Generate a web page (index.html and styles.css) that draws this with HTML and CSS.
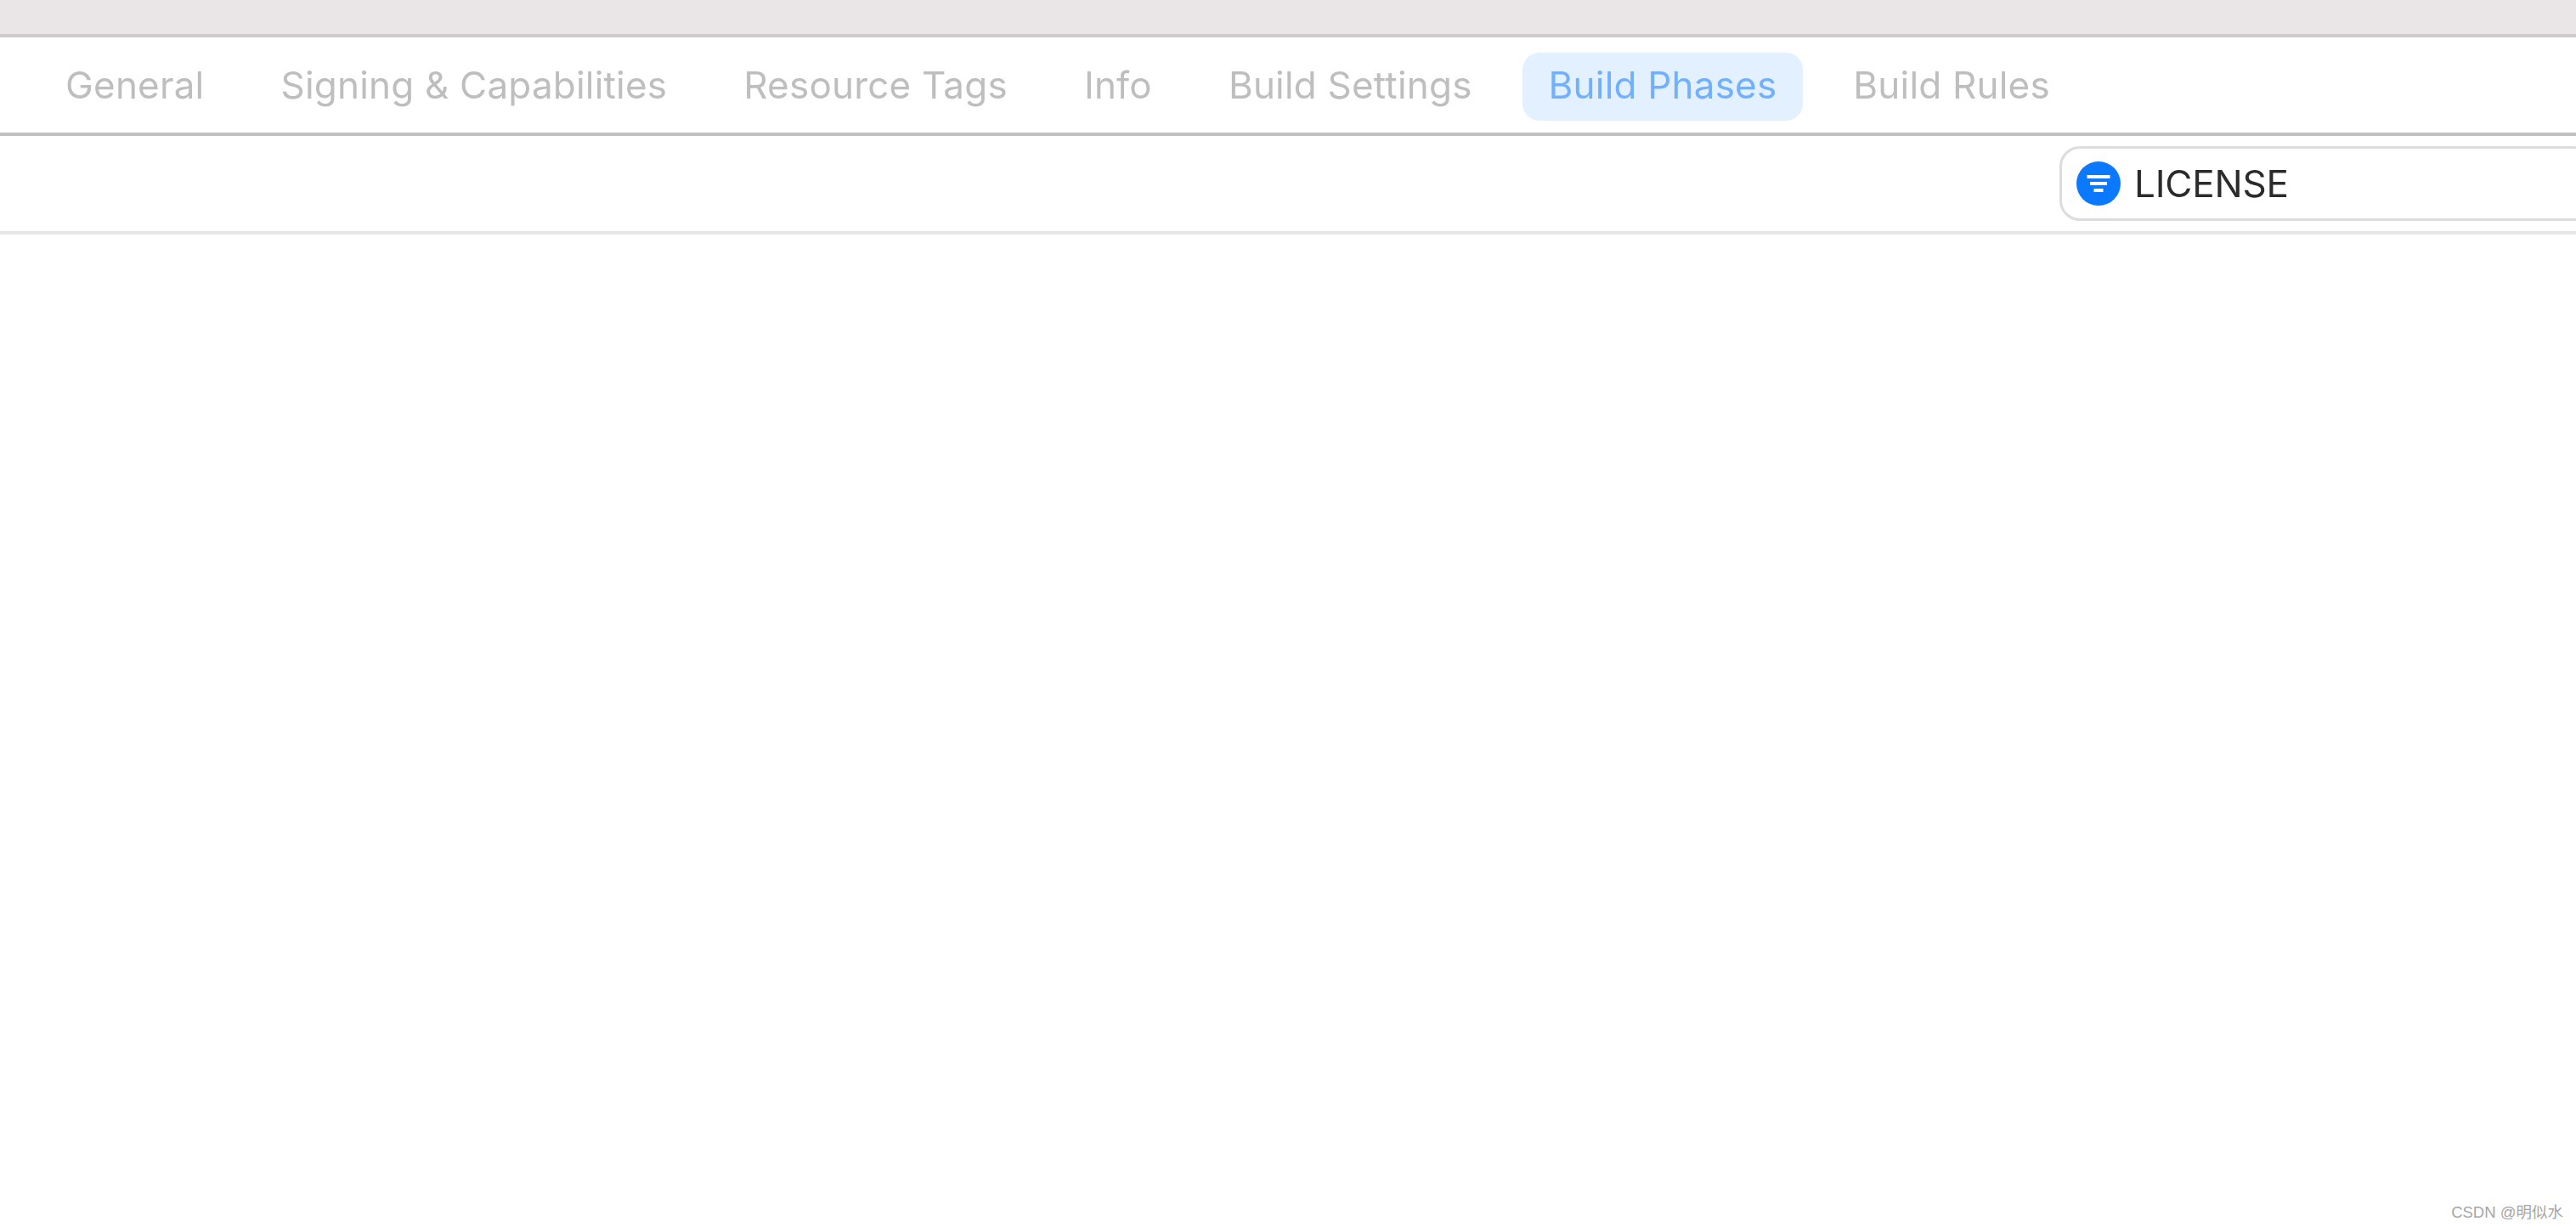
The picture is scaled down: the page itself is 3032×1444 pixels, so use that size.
FILE: index.html
```html
<!DOCTYPE html>
<html lang="en">
<head>
  <meta charset="UTF-8">
  <meta name="viewport" content="width=device-width, initial-scale=1.0">
  <title>Build Phases</title>
  <link rel="stylesheet" href="styles.css">
</head>
<body>
  <div class="titlebar"></div>

  <!-- Tabs -->
  <nav class="tabs">
    <div class="tab">General</div>
    <div class="tab">Signing &amp; Capabilities</div>
    <div class="tab">Resource Tags</div>
    <div class="tab">Info</div>
    <div class="tab">Build Settings</div>
    <div class="tab active">Build Phases</div>
    <div class="tab">Build Rules</div>
  </nav>

  <!-- Filter -->
  <div class="filterbar">
    <div class="filter">
      <svg class="filter-icon" viewBox="0 0 52 52">
        <circle cx="26" cy="26" r="26" fill="#0a78ff"/>
        <rect x="12.5" y="16" width="27" height="4" fill="#fff"/>
        <rect x="16" y="24" width="20" height="4" fill="#fff"/>
        <rect x="20.5" y="32" width="11" height="4" fill="#fff"/>
      </svg>
      <span class="filter-text">LICENSE</span>
    </div>
  </div>

  <div class="watermark">CSDN @明似水</div>
</body>
</html>
```

FILE: styles.css
```css
html, body {
  height: 100%;
}

body {
  margin: 0;
  position: relative;
  overflow: hidden;
  background: #fff;
  font-family: Inter, "Noto Sans", sans-serif;
}

.titlebar {
  height: 40px;
  background: #eae6e7;
  border-bottom: 4px solid #cfcbcc;
}

.tabs {
  display: flex;
  align-items: flex-start;
  gap: 28px;
  height: 94px;
  padding: 18px 0 0 46px;
  border-bottom: 4px solid #c1c1c1;
}

.tab {
  height: 80px;
  padding: 0 31px;
  line-height: 76px;
  font-size: 44px;
  letter-spacing: 0.2px;
  color: #bebebe;
  white-space: nowrap;
  border-radius: 20px;
  filter: blur(0.6px);
}

.tab.active {
  background: #e3f0ff;
  color: #72b0ff;
}

.filterbar {
  display: flex;
  justify-content: flex-end;
  align-items: center;
  height: 112px;
  border-bottom: 4px solid #e6e6e6;
}

.filter {
  display: flex;
  align-items: center;
  gap: 16px;
  box-sizing: border-box;
  width: 628px;
  height: 88px;
  margin-right: -20px;
  padding-left: 17px;
  border: 3px solid #dcdcdc;
  border-radius: 24px;
}

.filter-icon {
  width: 52px;
  height: 52px;
  flex-shrink: 0;
}

.filter-text {
  font-size: 44px;
  letter-spacing: -0.2px;
  color: #2b2b2b;
  filter: blur(0.5px);
}

.watermark {
  position: absolute;
  right: 15px;
  bottom: 6px;
  font-family: "Liberation Sans", "Noto Sans CJK SC", sans-serif;
  font-size: 18.5px;
  color: #a6a6a6;
}
```
